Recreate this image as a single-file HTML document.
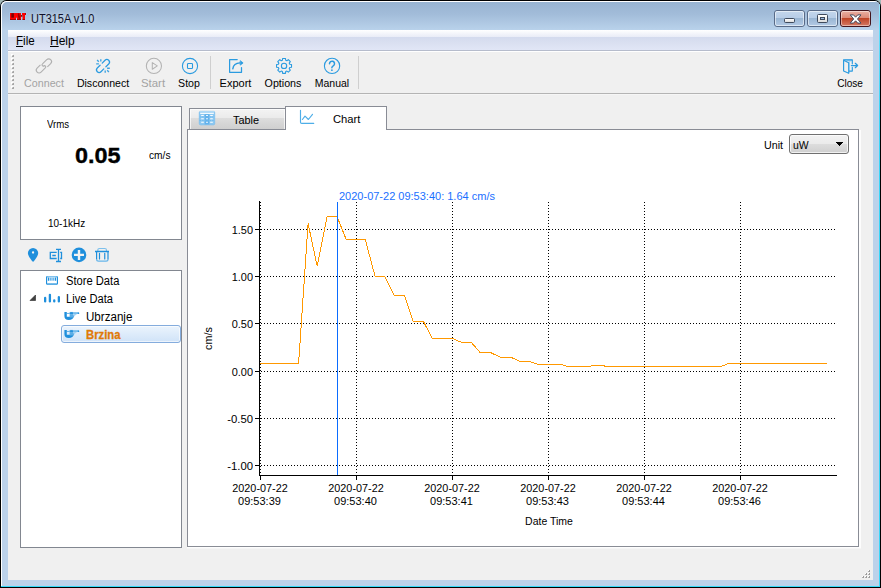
<!DOCTYPE html>
<html>
<head>
<meta charset="utf-8">
<title>UT315A v1.0</title>
<style>
html,body{margin:0;padding:0;overflow:hidden;}
html{width:881px;height:588px;}
body{width:881px;height:588px;position:relative;overflow:hidden;background:#a4baba;font-family:"Liberation Sans",sans-serif;font-size:11px;color:#000;}
.abs{position:absolute;}
svg{position:absolute;overflow:visible;}
#win{position:absolute;left:0;top:0;width:881px;height:588px;background:#000;border-radius:6.5px 6.5px 0 0;overflow:hidden;}
#frame{position:absolute;left:1px;top:1px;width:879px;height:586px;background:#bcd2ea;border-radius:5.5px 5.5px 0 0;overflow:hidden;}
#titlegrad{position:absolute;left:0;top:0;width:879px;height:29px;background:linear-gradient(#97b3d1,#a2bcd9 45%,#b9d2eb);}
#hl-left{position:absolute;left:0;top:0;width:879px;height:586px;border-radius:5px 5px 0 0;box-shadow:inset 1px 1px 0 0 #fff;}
#hl-top{display:none;}
#hl-right{position:absolute;left:878px;top:3px;width:1px;height:583px;background:linear-gradient(#a6e9fc 0px,#6adefa 20px,#3ad7f9 110px);}
#hl-bottom{position:absolute;left:0;top:585px;width:879px;height:1px;background:#35d9f8;}
#client{position:absolute;left:8px;top:30px;width:865px;height:550px;background:#f0f0f0;}
.t{position:absolute;white-space:nowrap;line-height:13px;}
.cap{position:absolute;top:10px;height:17px;box-sizing:border-box;border-radius:3px;border:1px solid #586a87;}
.cap i{position:absolute;left:0;top:0;right:0;bottom:0;border-radius:2px;border:1px solid rgba(255,255,255,.55);}
.panel{position:absolute;box-sizing:border-box;border:1px solid #828790;background:#fff;}
.tab{position:absolute;box-sizing:border-box;border:1px solid #898c95;border-bottom:none;}
</style>
</head>
<body>
<div id="win">
 <div id="frame">
  <div id="titlegrad"></div>
  <div id="hl-top"></div>
  <div id="hl-left"></div>
  <div id="hl-right"></div>
  <div id="hl-bottom"></div>
 </div>

<svg style="left:9px;top:12px" width="18" height="9" viewBox="-1 -1 18 9">
 <path d="M-.6 -.6h7v0h4.800v0h5.500v2.600h-1.200v5.600h-3.300v-4h-.8v4h-5v-1h-1v1h-6z" fill="#a9d6f5" opacity=".55"/>
 <g fill="#f00">
  <path d="M0 0h6v7H0z"/>
  <path d="M6 0h5v7H7V4.800H6z"/>
  <path d="M12 0h4v2h-1v5h-2.500V2H12z"/>
 </g>
 <rect x="10.800" y="2.100" width="1.600" height="1.600" fill="#6a0000"/>
 <g fill="#7c0000">
  <rect x="1.300" y=".2" width="2.600" height="4.500"/>
  <path d="M7.800 .3l1.300 0 .9 3.200v3.200l-.9 0-1.300-3.600z" opacity=".75"/>
  <rect x="0" y="6.200" width="6" height=".8" opacity=".8"/>
  <rect x="7" y="6.200" width="4" height=".8" opacity=".8"/>
  <rect x="12.500" y="6.200" width="2.500" height=".8" opacity=".8"/>
  <rect x="15" y=".2" width="1" height="1.500" opacity=".6"/>
 </g>
</svg>
<div class="t" style="left:31px;top:12px;font-size:12px;color:#000;transform:scaleX(0.9149855907780979);transform-origin:0 0;line-height:15px;color:#101028;text-shadow:0 0 5px rgba(255,255,255,.7);">UT315A v1.0</div>
<div class="cap" style="left:774px;width:31px;background:linear-gradient(#c3d6ec 0%,#b7cde7 47%,#9ab6d4 50%,#b3cae5 100%);"><i></i>
 <div class="abs" style="left:9px;top:7px;width:11px;height:5px;box-sizing:border-box;border:1px solid #3f4a5c;border-radius:1.5px;background:linear-gradient(#fff,#dcdcdc);"></div></div>
<div class="cap" style="left:807px;width:31px;background:linear-gradient(#c3d6ec 0%,#b7cde7 47%,#9ab6d4 50%,#b3cae5 100%);"><i></i>
 <div class="abs" style="left:9px;top:3px;width:11px;height:9px;box-sizing:border-box;border:1px solid #3f4a5c;border-radius:1.5px;background:linear-gradient(#fff,#dcdcdc);"></div>
 <div class="abs" style="left:12px;top:6px;width:5px;height:3px;box-sizing:border-box;border:1px solid #3f4a5c;background:#9dbbe0;"></div></div>
<div class="cap" style="left:840px;width:31px;border-color:#43141c;background:linear-gradient(#eab0a3 0%,#dc8977 47%,#bf4528 50%,#d57a64 100%);"><i style="border-color:rgba(255,255,255,.45)"></i>
 <svg style="left:8px;top:3px" width="13" height="10" viewBox="0 0 13 10"><path transform="translate(1.200 .9)" d="M0 0H3.300L5.400 2.300L7.500 0H10.800L7.300 4.100L10.800 8.200H7.500L5.400 5.900L3.300 8.200H0L3.500 4.100z" fill="#fff" stroke="#434e62" stroke-width="1" stroke-linejoin="round"/></svg></div>

<div id="client">
<div class="abs" style="left:-8px;top:-30px;width:881px;height:588px;">
<div class="abs" style="left:8px;top:30px;width:865px;height:20px;background:linear-gradient(#ffffff 0px,#f2f4fa 4px,#e9ecf7 7px,#d4dbee 7.5px,#d9dff0 12px,#e1e6f6 20px);"></div>
<div class="abs" style="left:8px;top:50px;width:865px;height:1px;background:#b6bccc;"></div>
<div class="abs" style="left:8px;top:51px;width:865px;height:1px;background:#fff;"></div>
<div class="t" style="left:16px;top:34px;font-size:12px;color:#000;transform:scaleX(0.965);transform-origin:0 0;line-height:15px;"><u>F</u>ile</div>
<div class="t" style="left:50px;top:34px;font-size:12px;color:#000;line-height:15px;"><u>H</u>elp</div>
<div class="abs" style="left:8px;top:93px;width:865px;height:1px;background:#b4b4b4;"></div>
<div class="abs" style="left:8px;top:94px;width:865px;height:1px;background:#f6f6f6;"></div>
<svg style="left:0;top:0" width="30" height="100" shape-rendering="crispEdges"><rect x="11" y="54" width="2" height="2" fill="#fff"/><rect x="12" y="55" width="2" height="2" fill="#a6a6a6"/><rect x="12" y="55" width="1" height="1" fill="#cdcdcd"/><rect x="11" y="58" width="2" height="2" fill="#fff"/><rect x="12" y="59" width="2" height="2" fill="#a6a6a6"/><rect x="12" y="59" width="1" height="1" fill="#cdcdcd"/><rect x="11" y="62" width="2" height="2" fill="#fff"/><rect x="12" y="63" width="2" height="2" fill="#a6a6a6"/><rect x="12" y="63" width="1" height="1" fill="#cdcdcd"/><rect x="11" y="66" width="2" height="2" fill="#fff"/><rect x="12" y="67" width="2" height="2" fill="#a6a6a6"/><rect x="12" y="67" width="1" height="1" fill="#cdcdcd"/><rect x="11" y="70" width="2" height="2" fill="#fff"/><rect x="12" y="71" width="2" height="2" fill="#a6a6a6"/><rect x="12" y="71" width="1" height="1" fill="#cdcdcd"/><rect x="11" y="74" width="2" height="2" fill="#fff"/><rect x="12" y="75" width="2" height="2" fill="#a6a6a6"/><rect x="12" y="75" width="1" height="1" fill="#cdcdcd"/><rect x="11" y="78" width="2" height="2" fill="#fff"/><rect x="12" y="79" width="2" height="2" fill="#a6a6a6"/><rect x="12" y="79" width="1" height="1" fill="#cdcdcd"/><rect x="11" y="82" width="2" height="2" fill="#fff"/><rect x="12" y="83" width="2" height="2" fill="#a6a6a6"/><rect x="12" y="83" width="1" height="1" fill="#cdcdcd"/><rect x="11" y="86" width="2" height="2" fill="#fff"/><rect x="12" y="87" width="2" height="2" fill="#a6a6a6"/><rect x="12" y="87" width="1" height="1" fill="#cdcdcd"/></svg>
<div class="abs" style="left:210px;top:56px;width:1px;height:33px;background:#cfcfcf;"></div>
<div class="abs" style="left:358px;top:56px;width:1px;height:33px;background:#cfcfcf;"></div>
<div class="t" style="left:-56.3px;top:77px;font-size:11px;color:#a3a3a3;transform:scaleX(0.9707317073170731);transform-origin:50% 0;width:200px;text-align:center;">Connect</div>
<div class="t" style="left:2.5999999999999943px;top:77px;font-size:11px;color:#000;transform:scaleX(0.9595588235294118);transform-origin:50% 0;width:200px;text-align:center;">Disconnect</div>
<div class="t" style="left:53.0px;top:77px;font-size:11px;color:#a3a3a3;transform:scaleX(1.038793103448276);transform-origin:50% 0;width:200px;text-align:center;">Start</div>
<div class="t" style="left:89.0px;top:77px;font-size:11px;color:#000;transform:scaleX(0.9646017699115044);transform-origin:50% 0;width:200px;text-align:center;">Stop</div>
<div class="t" style="left:135.5px;top:77px;font-size:11px;color:#000;width:200px;text-align:center;">Export</div>
<div class="t" style="left:182.89999999999998px;top:77px;font-size:11px;color:#000;transform:scaleX(0.970976253298153);transform-origin:50% 0;width:200px;text-align:center;">Options</div>
<div class="t" style="left:231.5px;top:77px;font-size:11px;color:#000;transform:scaleX(0.9529085872576176);transform-origin:50% 0;width:200px;text-align:center;">Manual</div>
<div class="t" style="left:750.2px;top:77px;font-size:11px;color:#000;transform:scaleX(0.9145907473309608);transform-origin:50% 0;width:200px;text-align:center;">Close</div>
<svg style="left:33px;top:55px" width="22" height="22" viewBox="0 0 22 22" fill="none" stroke-linecap="round" stroke-linejoin="round"><g transform="translate(10.9 10.9) rotate(-45)" stroke="#b0b0b0" stroke-width="1.100" stroke-linecap="butt"><path d="M1.700 3.200L6.400 3.200A2.800 2.800 0 0 0 6.400 -2.400L.4 -2.400A1.250 1.250 0 0 0 .2 .1"/><path d="M1.700 3.200L6.400 3.200A2.800 2.800 0 0 0 6.400 -2.400L.4 -2.400A1.250 1.250 0 0 0 .2 .1" transform="rotate(180)"/></g></svg>
<svg style="left:92px;top:55px" width="22" height="22" viewBox="0 0 22 22" fill="none" stroke-linecap="round" stroke-linejoin="round"><g stroke="#2a9be0" stroke-width="1.250"><g transform="translate(11 11) rotate(-45)"><path d="M1.500 -2.600L5.450 -2.600A2.600 2.600 0 0 1 5.450 2.600L1.500 2.600"/><path d="M1.500 -2.600L5.450 -2.600A2.600 2.600 0 0 1 5.450 2.600L1.500 2.600" transform="rotate(180)"/></g><g stroke-width="1.350" stroke-linecap="butt" opacity=".9"><path d="M5.100 5.100L6.800 6.800M8.800 4.200V6.600M4.200 8.800H6.900M16.900 16.900L15.200 15.200M13.200 17.800V15.400M17.800 13.200H15.100"/></g></g></svg>
<svg style="left:143px;top:55px" width="22" height="22" viewBox="0 0 22 22" fill="none" stroke-linecap="round" stroke-linejoin="round"><g stroke="#b3b3b3" stroke-width="1.050"><circle cx="10.900" cy="10.900" r="7.600"/><path d="M9.300 7.600v6.600l5-3.300z"/></g></svg>
<svg style="left:179px;top:55px" width="22" height="22" viewBox="0 0 22 22" fill="none" stroke-linecap="round" stroke-linejoin="round"><g stroke="#2a9be0" stroke-width="1.100"><circle cx="11" cy="11" r="7.600"/><rect x="8.500" y="8.500" width="5" height="5" rx=".8"/></g></svg>
<svg style="left:225px;top:55px" width="22" height="22" viewBox="0 0 22 22" fill="none" stroke-linecap="round" stroke-linejoin="round"><g stroke="#2a9be0" stroke-width="1.250"><path d="M12.200 4.600H4.600V17.300H16.500V12.500"/><path d="M7.800 13.800C8.300 10.200 11 8 15 7.900" stroke-width="1.400"/><path d="M15.500 5.900L18.100 7.900L15.500 9.900z" fill="#2a9be0" stroke-width=".8"/></g></svg>
<svg style="left:273px;top:55px" width="22" height="22" viewBox="0 0 22 22" fill="none" stroke-linecap="round" stroke-linejoin="round"><g stroke="#2a9be0" stroke-width="1.100"><path d="M16.72 9.25L18.52 9.48L18.52 12.32L16.72 12.55L16.22 13.74L17.34 15.17L15.32 17.19L13.89 16.07L12.70 16.57L12.47 18.37L9.63 18.37L9.40 16.57L8.21 16.07L6.78 17.19L4.76 15.17L5.88 13.74L5.38 12.55L3.58 12.32L3.58 9.48L5.38 9.25L5.88 8.06L4.76 6.63L6.78 4.61L8.21 5.73L9.40 5.23L9.63 3.43L12.47 3.43L12.70 5.23L13.89 5.73L15.32 4.61L17.34 6.63L16.22 8.06Z"/><circle cx="11.050" cy="10.900" r="2.650"/></g></svg>
<svg style="left:321px;top:55px" width="22" height="22" viewBox="0 0 22 22" fill="none" stroke-linecap="round" stroke-linejoin="round"><g stroke="#2a9be0" stroke-width="1.100"><circle cx="11.050" cy="10.900" r="7.650"/><path d="M8.500 8.700A2.500 2.500 0 1 1 12.900 10.300L11.500 11.500Q10.900 12 10.900 12.700" stroke-width="1.500"/><circle cx="10.900" cy="15.200" r=".85" fill="#2a9be0" stroke="none"/></g></svg>
<svg style="left:839px;top:55px" width="22" height="22" viewBox="0 0 22 22" fill="none" stroke-linecap="round" stroke-linejoin="round"><path d="M4.600 4.300H13.400V5.600L9.700 7.600V18.300L10.800 17.500V6.900z" fill="#a5d3f3" stroke="none"/><g stroke="#2a9be0" stroke-width="1.150"><path d="M4.600 4.800H13.300V8.800M13.300 12.300V16.100H10.400"/><path d="M4.600 5.200L9.700 7.700V18.300L4.600 16z"/><path d="M12.400 10.500H18.500M16.300 8.300L18.600 10.500L16.300 12.700" stroke-width="1.250"/></g></svg>
<div class="panel" style="left:20px;top:106px;width:162px;height:134px;"></div>
<div class="t" style="left:47px;top:118px;font-size:11px;color:#000;transform:scaleX(0.8774703557312252);transform-origin:0 0;">Vrms</div>
<div class="t" style="left:75.1px;top:142.9px;font-size:22.5px;color:#000;font-weight:bold;transform:scaleX(1.04);transform-origin:0 0;line-height:26px;-webkit-text-stroke:.35px #000;">0.05</div>
<div class="t" style="left:149px;top:149px;font-size:11px;color:#000;transform:scaleX(0.9267241379310345);transform-origin:0 0;">cm/s</div>
<div class="t" style="left:48px;top:217px;font-size:11px;color:#000;transform:scaleX(0.9073170731707317);transform-origin:0 0;">10-1kHz</div>
<svg style="left:24px;top:244px" width="44" height="22" viewBox="0 0 44 22" fill="none" stroke-linecap="round" stroke-linejoin="round"><path d="M9.050 18C9.050 18 3.900 12.600 3.900 9.100A5.150 5.150 0 0 1 14.200 9.100C14.200 12.600 9.050 18 9.050 18z" fill="#1f8fdc" stroke="none"/><circle cx="9.050" cy="8.500" r="1.150" fill="#f4f4f4" stroke="none"/><g stroke="#1f8fdc" stroke-width="1.300" stroke-linecap="butt" stroke-linejoin="miter"><path d="M32.700 8.300H26.300V14.500H32.700M36.200 8.300H37.500V14.500H36.200M28.300 11.500H31.800M32 5.300H37M32 17.500H37M34.500 5.300V17.500"/></g></svg>
<svg style="left:68px;top:244px" width="44" height="22" viewBox="0 0 44 22" fill="none" stroke-linecap="round" stroke-linejoin="round"><circle cx="11" cy="10.900" r="7.300" fill="#1f8fdc" stroke="none"/><path d="M11 6V16M6 10.900H16" stroke="#f2f2f2" stroke-width="2.400" stroke-linecap="butt"/><g stroke-linecap="butt"><path d="M29.800 7.300V6.200Q29.800 4.500 31.500 4.500H36.800Q38.500 4.500 38.500 6.200V7.300" stroke="#7dc0ec" stroke-width="1.100"/><path d="M27 7.500H41" stroke="#1f8fdc" stroke-width="1.300"/><path d="M28.600 8V15.500M40 8V15.500" stroke="#1f8fdc" stroke-width="1.200"/><path d="M28.600 15.300Q28.600 17.200 30.500 17.200H38.100Q40 17.200 40 15.300" stroke="#66b5ea" stroke-width="1.200"/><path d="M31.500 9.300V15M36.750 9.300V15" stroke="#1f8fdc" stroke-width="1.200" stroke-linecap="round"/></g></svg>
<div class="panel" style="left:20px;top:270px;width:162px;height:278px;"></div>
<div class="abs" style="left:61px;top:325px;width:120px;height:18px;box-sizing:border-box;border:1px solid #84acdd;border-radius:3px;background:linear-gradient(#ebf4fd,#d0e3f8);box-shadow:inset 0 0 0 1px rgba(255,255,255,.6);"></div>
<div class="t" style="left:66px;top:274px;font-size:12px;color:#000;transform:scaleX(0.9303135888501742);transform-origin:0 0;line-height:15px;">Store Data</div>
<div class="t" style="left:66px;top:292px;font-size:12px;color:#000;transform:scaleX(0.9270216962524654);transform-origin:0 0;line-height:15px;">Live Data</div>
<div class="t" style="left:86.4px;top:310px;font-size:12px;color:#000;transform:scaleX(0.965);transform-origin:0 0;line-height:15px;">Ubrzanje</div>
<div class="t" style="left:86.3px;top:328px;font-size:12px;color:#e07a08;font-weight:bold;transform:scaleX(0.94);transform-origin:0 0;line-height:15px;-webkit-text-stroke:.3px #e07a08;">Brzina</div>
<svg style="left:29px;top:294px" width="8" height="8" viewBox="0 0 8 8"><path d="M6.500 1v5.500H1z" fill="#404040" stroke="#262626" stroke-width=".6"/></svg>
<svg style="left:42px;top:272px" width="22" height="18" viewBox="0 0 22 18" fill="none" stroke-linecap="round" stroke-linejoin="round"><rect x="4.600" y="4.600" width="10.800" height="7.600" rx=".8" fill="#fff" stroke="#1f8fdc" stroke-width="1.200"/><rect x="5.200" y="4.100" width="9.600" height="1" fill="#8cc8f0" stroke="none"/><rect x="5.700" y="5.600" width="8.600" height="3.100" fill="#b5dbf5" stroke="none"/><path d="M6.500 6V8.300M13.500 6V8.300" stroke="#1f8fdc" stroke-width="1" stroke-linecap="round"/><path d="M8.800 6.200V8.100M11.200 6.200V8.100" stroke="#4aa6e6" stroke-width="1" stroke-linecap="round"/><rect x="5.500" y="9.400" width="9" height="1.300" fill="#fff" stroke="none"/><path d="M6.300 11.800H13.700" stroke="#6ab8eb" stroke-width=".9" stroke-dasharray="1.400 1"/></svg>
<svg style="left:40px;top:288px" width="24" height="18" viewBox="0 0 24 18" fill="none" stroke-linecap="round" stroke-linejoin="round"><g stroke="#1f8fdc" stroke-width="2.300" stroke-linecap="round"><path d="M5.150 10V13.400M9.900 6.800V13.400M14.250 12.300V13.400M18.850 9.200V13.400"/></g></svg>
<svg style="left:60px;top:308px" width="22" height="16" viewBox="0 0 22 16" fill="none" stroke-linecap="round" stroke-linejoin="round"><path d="M4.400 4.100H6.800V8.700H9.700V6.200H13.200L14.200 8.300Q13 12 8.800 12Q4.400 12 4.400 8z" fill="#1f8fdc" stroke="none"/><path d="M9.700 6.200H14.200V9.500H9.700z" fill="#f7fbfe" opacity=".28" stroke="none"/><path d="M9.700 3.950H13.600V6.200H9.700z" fill="#1f8fdc" stroke="none"/><path d="M6.800 5.450H9.700" stroke="#1f8fdc" stroke-width=".7" stroke-linecap="butt"/><path d="M13.600 4.100H18.800V6H13.600z" fill="#74bced" stroke="none"/><path d="M13.200 6H17L14.200 8.300z" fill="#a3d3f3" stroke="none"/><path d="M10.400 4.700H17.500" stroke="#9fd0f2" stroke-width=".6" stroke-dasharray=".8 .6" stroke-linecap="butt"/><circle cx="18.500" cy="5.300" r=".8" fill="#1f8fdc" stroke="none"/></svg>
<svg style="left:60px;top:326px" width="22" height="16" viewBox="0 0 22 16" fill="none" stroke-linecap="round" stroke-linejoin="round"><path d="M4.400 4.100H6.800V8.700H9.700V6.200H13.200L14.200 8.300Q13 12 8.800 12Q4.400 12 4.400 8z" fill="#1f8fdc" stroke="none"/><path d="M9.700 6.200H14.200V9.500H9.700z" fill="#f7fbfe" opacity=".28" stroke="none"/><path d="M9.700 3.950H13.600V6.200H9.700z" fill="#1f8fdc" stroke="none"/><path d="M6.800 5.450H9.700" stroke="#1f8fdc" stroke-width=".7" stroke-linecap="butt"/><path d="M13.600 4.100H18.800V6H13.600z" fill="#74bced" stroke="none"/><path d="M13.200 6H17L14.200 8.300z" fill="#a3d3f3" stroke="none"/><path d="M10.400 4.700H17.500" stroke="#9fd0f2" stroke-width=".6" stroke-dasharray=".8 .6" stroke-linecap="butt"/><circle cx="18.500" cy="5.300" r=".8" fill="#1f8fdc" stroke="none"/></svg>
<div class="panel" style="left:187px;top:129px;width:672px;height:418px;border-color:#898c95;"></div>
<div class="abs" style="left:187px;top:547px;width:674px;height:1px;background:#fdfdfd;"></div><div class="abs" style="left:187px;top:548px;width:674px;height:1px;background:#f6f6f6;"></div><div class="abs" style="left:859px;top:130px;width:2px;height:418px;background:#fdfdfd;"></div>
<div class="tab" style="left:189px;top:108px;width:97px;height:21px;background:linear-gradient(#f3f3f3 0%,#ebebeb 43%,#dddddd 47%,#cfcfcf 100%);box-shadow:inset 0 1px 0 #fcfcfc,inset 1px 0 0 rgba(255,255,255,.7),inset -1px 0 0 rgba(255,255,255,.7);"></div>
<div class="tab" style="left:285px;top:106px;width:102px;height:24px;background:#fff;"></div>
<div class="t" style="left:233px;top:114px;font-size:11px;color:#000;transform:scaleX(0.9885931558935361);transform-origin:0 0;">Table</div>
<div class="t" style="left:333px;top:113px;font-size:11px;color:#000;transform:scaleX(1.0185873605947955);transform-origin:0 0;">Chart</div>
<svg style="left:195px;top:107px" width="24" height="22" viewBox="0 0 24 22"><rect x="4.300" y="4.400" width="15.400" height="13.400" rx="1.200" fill="#8dc8f1" stroke="#79bff0" stroke-width=".8"/><rect x="5" y="4.300" width="14" height="1.300" fill="#bfe1f7"/><rect x="9.700" y="7.200" width="4.600" height="10.200" fill="#55abe9" opacity=".75"/><path d="M4.700 10H19.300M4.700 13.500H19.300" stroke="#6cb8ed" stroke-width=".9" stroke-dasharray="1.400 1.100" fill="none"/><rect x="5.200" y="5.900" width="13.600" height="1" fill="#fff"/><rect x="6.15" y="7.95" width="2.7" height="1.100" rx=".3" fill="#fbfdff"/><rect x="11.05" y="7.95" width="1.9" height="1.100" rx=".3" fill="#fbfdff"/><rect x="15.15" y="7.95" width="2.7" height="1.100" rx=".3" fill="#fbfdff"/><rect x="6.15" y="11.15" width="2.7" height="1.100" rx=".3" fill="#fbfdff"/><rect x="11.05" y="11.15" width="1.9" height="1.100" rx=".3" fill="#fbfdff"/><rect x="15.15" y="11.15" width="2.7" height="1.100" rx=".3" fill="#fbfdff"/><rect x="6.15" y="14.75" width="2.7" height="1.100" rx=".3" fill="#fbfdff"/><rect x="11.05" y="14.75" width="1.9" height="1.100" rx=".3" fill="#fbfdff"/><rect x="15.15" y="14.75" width="2.7" height="1.100" rx=".3" fill="#fbfdff"/></svg>
<svg style="left:296px;top:106px" width="24" height="22" viewBox="0 0 24 22" fill="none" stroke-linecap="round" stroke-linejoin="round"><g stroke="#4eaee8" stroke-width="1.150"><path d="M4.500 4.200V16.200Q4.500 17.400 5.700 17.400H17.700"/><path d="M6.400 13.500L9 10.100L12.400 13.500L16.500 8.300"/></g></svg>
<div class="t" style="left:763.5px;top:139px;font-size:11px;color:#000;transform:scaleX(0.9744897959183674);transform-origin:0 0;">Unit</div>
<div class="abs" style="left:789px;top:134px;width:60px;height:20px;box-sizing:border-box;border:1px solid #707070;border-radius:3px;background:linear-gradient(#f2f2f2 0%,#ebebeb 48%,#dddddd 52%,#cfcfcf 100%);box-shadow:inset 0 0 0 1px rgba(255,255,255,.7);"></div>
<div class="t" style="left:792.5px;top:139px;font-size:11px;color:#000;transform:scaleX(0.95);transform-origin:0 0;">uW</div>
<svg style="left:836px;top:142px" width="7" height="4" viewBox="0 0 7 4" shape-rendering="crispEdges"><path d="M0 0h7L3.500 4z" fill="#000"/></svg>
<svg style="left:0;top:0" width="881" height="588" shape-rendering="crispEdges"><path d="M260.500 229.5H837" stroke="#000" stroke-width="1" stroke-dasharray="1 2"/><path d="M255 229.5H259" stroke="#000" stroke-width="1"/><path d="M260.500 276.5H837" stroke="#000" stroke-width="1" stroke-dasharray="1 2"/><path d="M255 276.5H259" stroke="#000" stroke-width="1"/><path d="M260.500 323.5H837" stroke="#000" stroke-width="1" stroke-dasharray="1 2"/><path d="M255 323.5H259" stroke="#000" stroke-width="1"/><path d="M260.500 371.5H837" stroke="#000" stroke-width="1" stroke-dasharray="1 2"/><path d="M255 371.5H259" stroke="#000" stroke-width="1"/><path d="M260.500 418.5H837" stroke="#000" stroke-width="1" stroke-dasharray="1 2"/><path d="M255 418.5H259" stroke="#000" stroke-width="1"/><path d="M260.500 465.5H837" stroke="#000" stroke-width="1" stroke-dasharray="1 2"/><path d="M255 465.5H259" stroke="#000" stroke-width="1"/><path d="M260.5 202V475" stroke="#000" stroke-width="1" stroke-dasharray="1 2"/><path d="M260.5 475V480" stroke="#000" stroke-width="1"/><path d="M356.5 202V475" stroke="#000" stroke-width="1" stroke-dasharray="1 2"/><path d="M356.5 475V480" stroke="#000" stroke-width="1"/><path d="M452.5 202V475" stroke="#000" stroke-width="1" stroke-dasharray="1 2"/><path d="M452.5 475V480" stroke="#000" stroke-width="1"/><path d="M548.5 202V475" stroke="#000" stroke-width="1" stroke-dasharray="1 2"/><path d="M548.5 475V480" stroke="#000" stroke-width="1"/><path d="M644.5 202V475" stroke="#000" stroke-width="1" stroke-dasharray="1 2"/><path d="M644.5 475V480" stroke="#000" stroke-width="1"/><path d="M740.5 202V475" stroke="#000" stroke-width="1" stroke-dasharray="1 2"/><path d="M740.5 475V480" stroke="#000" stroke-width="1"/><path d="M259.500 201V476" stroke="#000" stroke-width="1"/><path d="M259 475.500H837" stroke="#000" stroke-width="1"/><polyline fill="none" stroke="#ff9800" stroke-width="1" points="260.1,363.5 298.6,363.5 308.1,223.5 317.2,266.3 327.0,216.7 337.1,216.7 346.3,239.7 365.3,239.7 375.1,276.4 384.5,276.4 394.4,295.5 404.6,295.5 413.4,321.8 423.6,321.8 432.5,338.7 453.1,338.7 461.8,342.5 471.4,342.5 480.4,352.9 491.3,352.9 500.8,357.5 511.4,357.5 520.4,361.6 530.0,361.6 539.0,364.6 561.3,364.6 568.1,366.5 585.8,367.0 592.6,365.7 604.1,365.7 606.1,366.9 720.1,366.9 727.6,363.9 827.1,363.9"/><path d="M337.500 202V475" stroke="#0a6cff" stroke-width="1"/></svg>
<div class="t" style="left:339px;top:190px;font-size:11px;color:#1a6fff;">2020-07-22 09:53:40: 1.64 cm/s</div>
<div class="t" style="left:53.0px;top:224px;font-size:11px;color:#000;transform:scaleX(0.995);transform-origin:100% 0;width:200px;text-align:right;">1.50</div>
<div class="t" style="left:53.0px;top:271px;font-size:11px;color:#000;transform:scaleX(0.995);transform-origin:100% 0;width:200px;text-align:right;">1.00</div>
<div class="t" style="left:53.0px;top:318px;font-size:11px;color:#000;transform:scaleX(0.995);transform-origin:100% 0;width:200px;text-align:right;">0.50</div>
<div class="t" style="left:53.0px;top:366px;font-size:11px;color:#000;transform:scaleX(0.995);transform-origin:100% 0;width:200px;text-align:right;">0.00</div>
<div class="t" style="left:53.0px;top:413px;font-size:11px;color:#000;transform:scaleX(1.03);transform-origin:100% 0;width:200px;text-align:right;">-0.50</div>
<div class="t" style="left:53.0px;top:460px;font-size:11px;color:#000;transform:scaleX(1.03);transform-origin:100% 0;width:200px;text-align:right;">-1.00</div>
<div class="t" style="left:160px;top:482px;font-size:11px;color:#000;transform:scaleX(0.9840142095914742);transform-origin:50% 0;width:200px;text-align:center;">2020-07-22</div>
<div class="t" style="left:159.5px;top:494.5px;font-size:11px;color:#000;width:200px;text-align:center;">09:53:39</div>
<div class="t" style="left:256px;top:482px;font-size:11px;color:#000;transform:scaleX(0.9840142095914742);transform-origin:50% 0;width:200px;text-align:center;">2020-07-22</div>
<div class="t" style="left:255.5px;top:494.5px;font-size:11px;color:#000;width:200px;text-align:center;">09:53:40</div>
<div class="t" style="left:352px;top:482px;font-size:11px;color:#000;transform:scaleX(0.9840142095914742);transform-origin:50% 0;width:200px;text-align:center;">2020-07-22</div>
<div class="t" style="left:351.5px;top:494.5px;font-size:11px;color:#000;width:200px;text-align:center;">09:53:41</div>
<div class="t" style="left:448px;top:482px;font-size:11px;color:#000;transform:scaleX(0.9840142095914742);transform-origin:50% 0;width:200px;text-align:center;">2020-07-22</div>
<div class="t" style="left:447.5px;top:494.5px;font-size:11px;color:#000;width:200px;text-align:center;">09:53:43</div>
<div class="t" style="left:544px;top:482px;font-size:11px;color:#000;transform:scaleX(0.9840142095914742);transform-origin:50% 0;width:200px;text-align:center;">2020-07-22</div>
<div class="t" style="left:543.5px;top:494.5px;font-size:11px;color:#000;width:200px;text-align:center;">09:53:44</div>
<div class="t" style="left:640px;top:482px;font-size:11px;color:#000;transform:scaleX(0.9840142095914742);transform-origin:50% 0;width:200px;text-align:center;">2020-07-22</div>
<div class="t" style="left:639.5px;top:494.5px;font-size:11px;color:#000;width:200px;text-align:center;">09:53:46</div>
<div class="t" style="left:449.4px;top:515px;font-size:11px;color:#000;transform:scaleX(0.9520958083832336);transform-origin:50% 0;width:200px;text-align:center;">Date Time</div>
<div class="t" style="left:108.300px;top:331.800px;width:200px;text-align:center;transform:rotate(-90deg) scaleX(.98);transform-origin:50% 50%;">cm/s</div>
<svg style="left:0;top:0" width="881" height="588" shape-rendering="crispEdges"><rect x="868" y="570" width="1" height="1" fill="#fff"/><rect x="869" y="570" width="1" height="2" fill="#9a9a9a"/><rect x="868" y="571" width="1" height="1" fill="#b0b0b0"/><rect x="865" y="573" width="1" height="1" fill="#fff"/><rect x="866" y="573" width="1" height="2" fill="#9a9a9a"/><rect x="865" y="574" width="1" height="1" fill="#b0b0b0"/><rect x="868" y="573" width="1" height="1" fill="#fff"/><rect x="869" y="573" width="1" height="2" fill="#9a9a9a"/><rect x="868" y="574" width="1" height="1" fill="#b0b0b0"/><rect x="862" y="576" width="1" height="1" fill="#fff"/><rect x="863" y="576" width="1" height="2" fill="#9a9a9a"/><rect x="862" y="577" width="1" height="1" fill="#b0b0b0"/><rect x="865" y="576" width="1" height="1" fill="#fff"/><rect x="866" y="576" width="1" height="2" fill="#9a9a9a"/><rect x="865" y="577" width="1" height="1" fill="#b0b0b0"/><rect x="868" y="576" width="1" height="1" fill="#fff"/><rect x="869" y="576" width="1" height="2" fill="#9a9a9a"/><rect x="868" y="577" width="1" height="1" fill="#b0b0b0"/></svg>
</div></div></div></body></html>
